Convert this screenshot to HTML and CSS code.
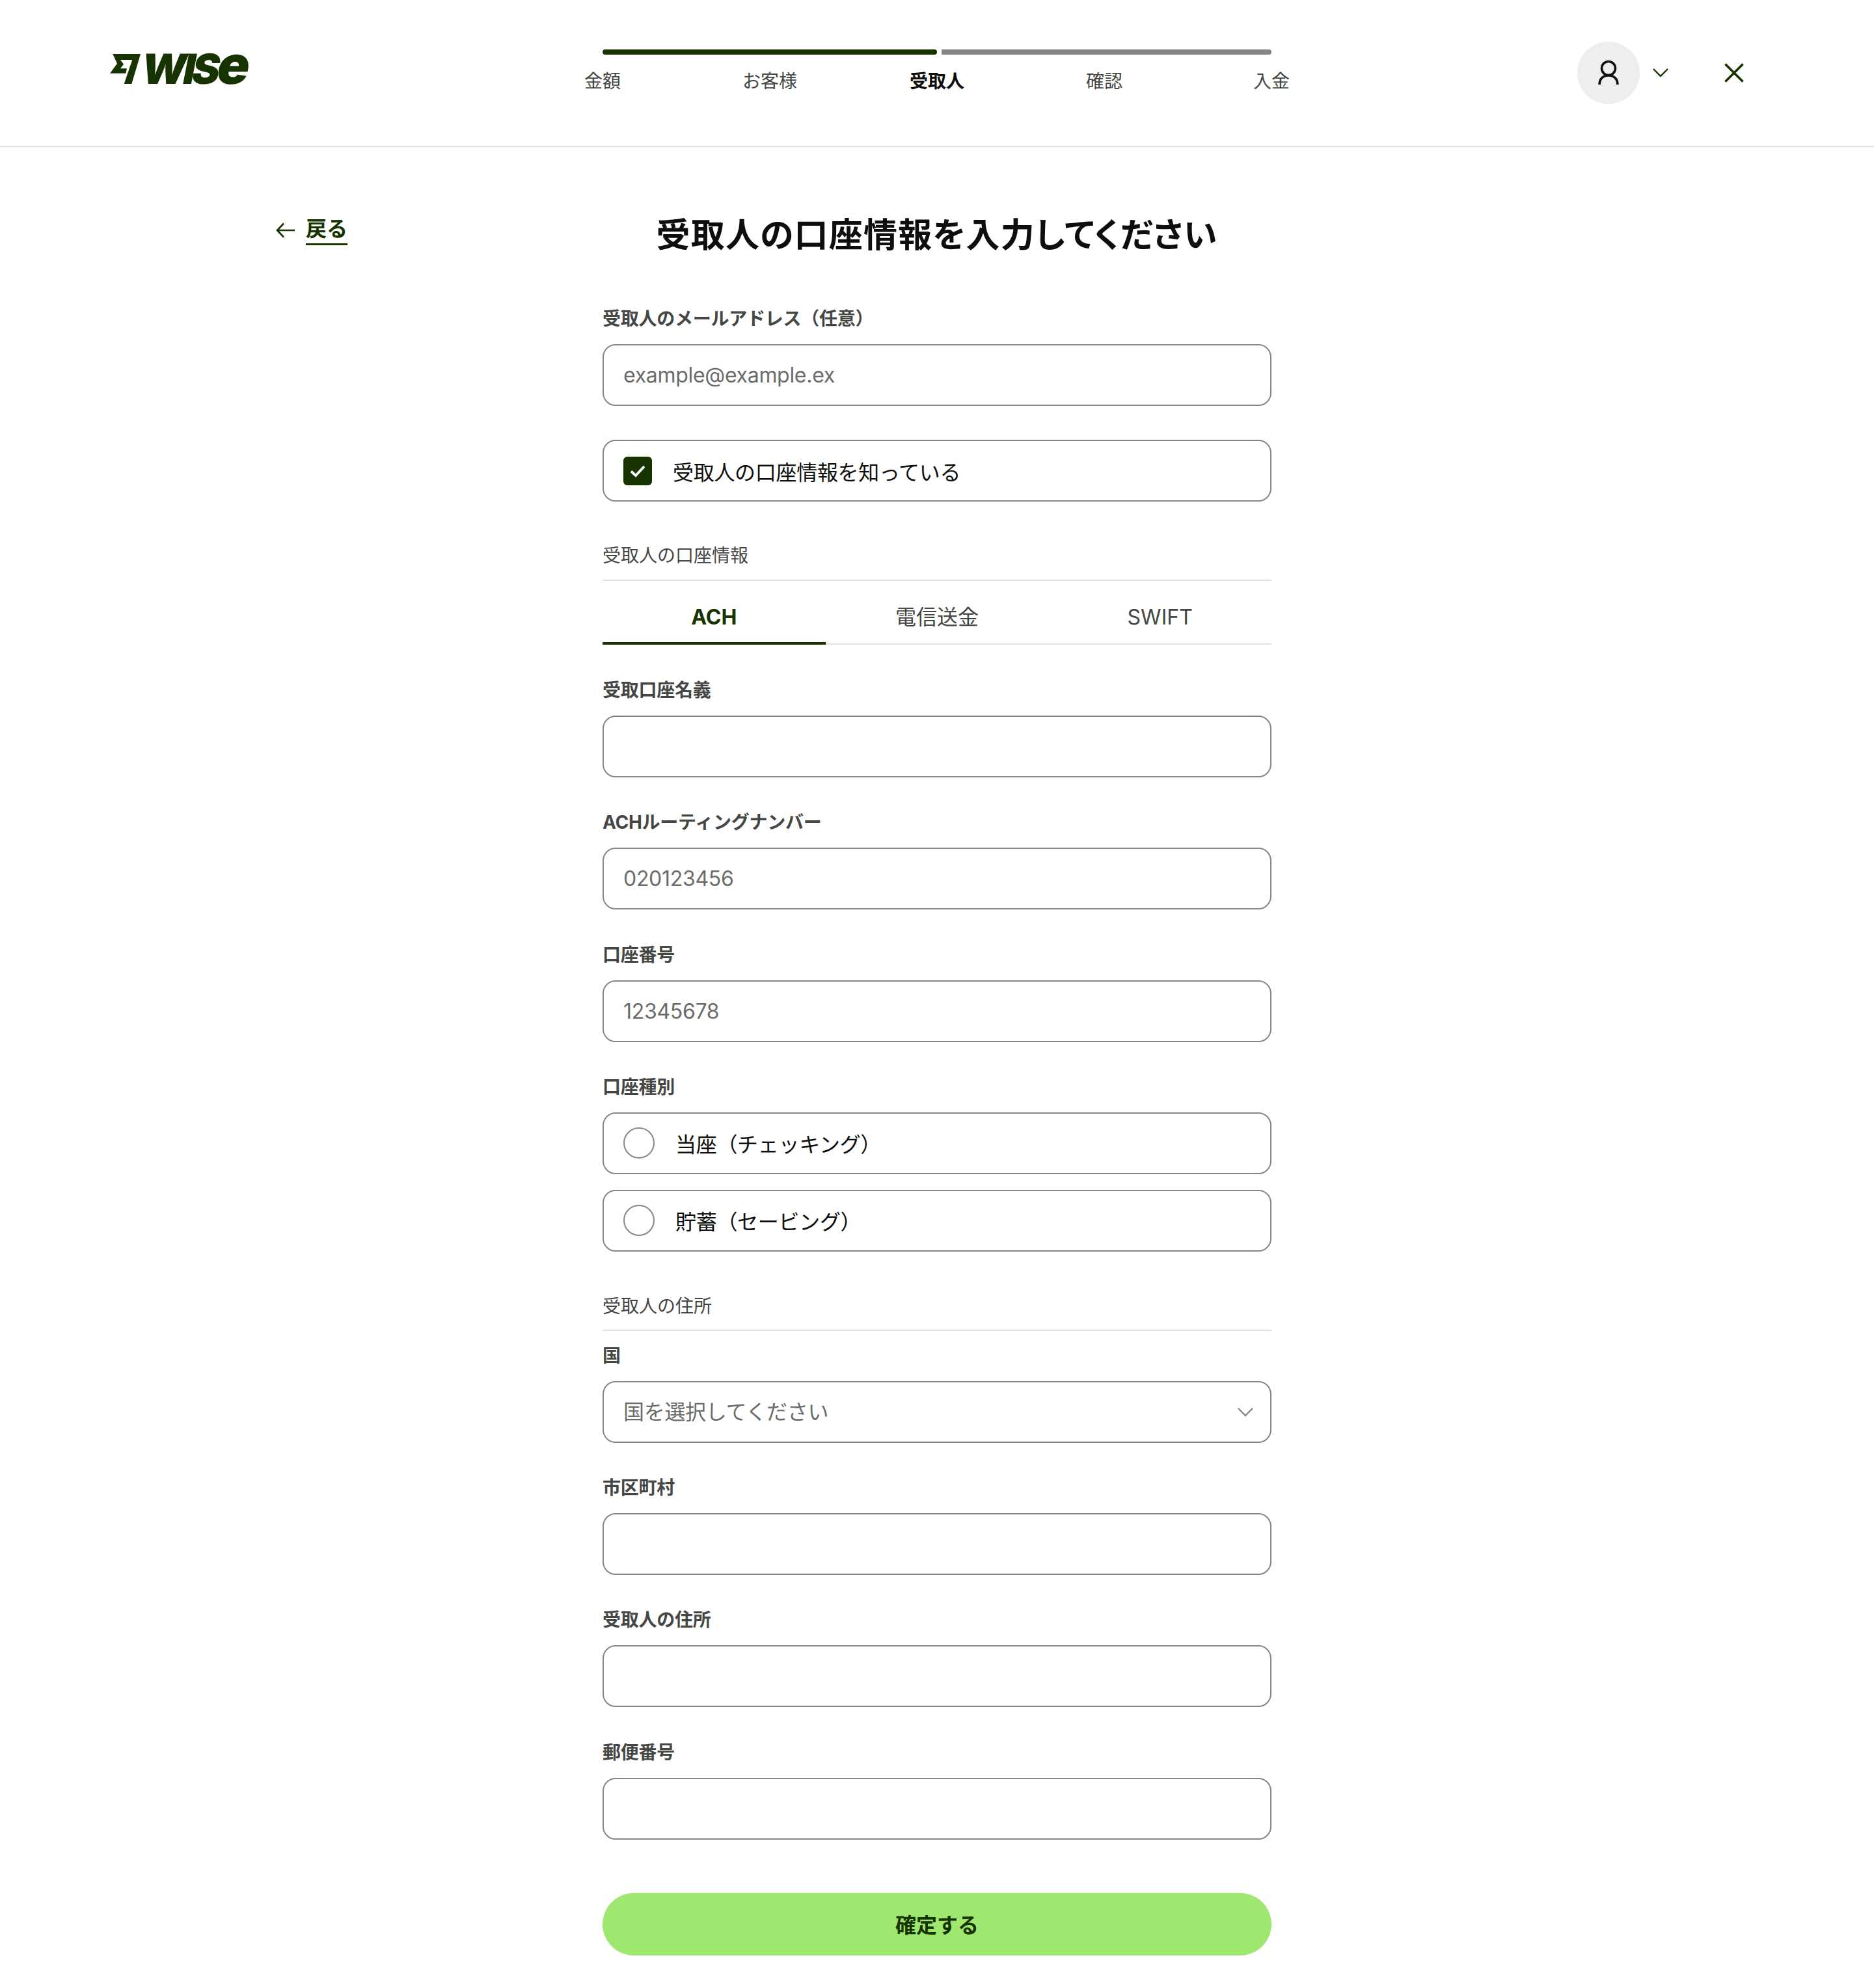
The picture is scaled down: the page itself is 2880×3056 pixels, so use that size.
FILE: index.html
```html
<!DOCTYPE html>
<html lang="ja">
<head>
  <meta charset="UTF-8" />
  <meta name="viewport" content="width=device-width, initial-scale=1.0" />
  <title>Wise</title>
  <link rel="stylesheet" href="styles.css">
</head>
<body>
  <header class="topbar">
    <div class="logo">
      <svg class="logo-flag" width="48" height="46" viewBox="0 0 48 46">
        <path d="M4.3 0H47L33.3 46H21.7L34.3 9H16L21 15.7L16 22.3H26L24.3 29.7H0L11 14.7Z" />
      </svg>
      <span class="logo-word">WIS<span class="logo-e">e</span></span>
    </div>

    <div class="stepper">
      <div class="step-bars">
        <div class="step-bar done"></div>
        <div class="step-bar"></div>
      </div>
      <div class="step-labels">
        <div class="step"><span>金額</span></div>
        <div class="step"><span>お客様</span></div>
        <div class="step current"><span>受取人</span></div>
        <div class="step"><span>確認</span></div>
        <div class="step"><span>入金</span></div>
      </div>
    </div>

    <div class="account">
      <div class="avatar">
        <svg width="36" height="40" viewBox="0 0 36 40" fill="none" stroke="#0e0f0c" stroke-width="3.6">
          <circle cx="18" cy="13" r="10.5" />
          <path d="M4 38C4 29 10 24 18 24S32 29 32 38" />
        </svg>
      </div>
      <svg class="account-chevron" width="24" height="14" viewBox="0 0 24 14" fill="none" stroke="#163300" stroke-width="2.4">
        <path d="M1 1L12 12L23 1" />
      </svg>
      <svg class="close" width="30" height="30" viewBox="0 0 30 30" fill="none" stroke="#163300" stroke-width="3.6">
        <path d="M1.5 1.5L28.5 28.5M28.5 1.5L1.5 28.5" />
      </svg>
    </div>
  </header>

  <main class="page">
    <a class="back" href="#">
      <svg width="30" height="24" viewBox="0 0 30 24" fill="none" stroke="#163300" stroke-width="2.6">
        <path d="M29 12H3M12 1.5L2 12L12 22.5" />
      </svg>
      <span>戻る</span>
    </a>

    <form class="form">
      <h1>受取人の口座情報を入力してください</h1>

      <div class="field">
        <label>受取人のメールアドレス（任意）</label>
        <input type="text" placeholder="example@example.ex" />
      </div>

      <div class="box check-box">
        <span class="checkbox">
          <svg width="24" height="20" viewBox="0 0 24 20" fill="none" stroke="#fff" stroke-width="3.8">
            <path d="M2 10.5L9 17L22 3" />
          </svg>
        </span>
        <span>受取人の口座情報を知っている</span>
      </div>

      <div class="section-title account-title">受取人の口座情報</div>

      <div class="tabs">
        <div class="tab active">ACH</div>
        <div class="tab">電信送金</div>
        <div class="tab">SWIFT</div>
      </div>

      <div class="field">
        <label>受取口座名義</label>
        <input type="text" />
      </div>

      <div class="field">
        <label>ACHルーティングナンバー</label>
        <input type="text" placeholder="020123456" />
      </div>

      <div class="field">
        <label>口座番号</label>
        <input type="text" placeholder="12345678" />
      </div>

      <div class="field radios">
        <label>口座種別</label>
        <div class="box radio-box"><span class="radio"></span><span>当座（チェッキング）</span></div>
        <div class="box radio-box"><span class="radio"></span><span>貯蓄（セービング）</span></div>
      </div>

      <div class="section-title address-title">受取人の住所</div>

      <div class="field">
        <label>国</label>
        <div class="select">
          <select>
            <option>国を選択してください</option>
          </select>
          <svg width="24" height="14" viewBox="0 0 24 14" fill="none" stroke="#868685" stroke-width="2.4">
            <path d="M1 1L12 12L23 1" />
          </svg>
        </div>
      </div>

      <div class="field">
        <label>市区町村</label>
        <input type="text" />
      </div>

      <div class="field">
        <label>受取人の住所</label>
        <input type="text" />
      </div>

      <div class="field">
        <label>郵便番号</label>
        <input type="text" />
      </div>

      <button class="submit" type="button">確定する</button>
    </form>
  </main>
</body>
</html>
```

FILE: styles.css
```css
* { box-sizing: border-box; }

body {
  margin: 0;
  background: #fff;
  color: #0e0f0c;
  font-family: Inter, "Noto Sans CJK JP", sans-serif;
  font-size: 32px;
}

.topbar {
  display: grid;
  grid-template-columns: 1fr 1028px 1fr;
  height: 226px;
  border-bottom: 2px solid #e2e2e2;
}

.logo {
  display: flex;
  align-items: flex-start;
  gap: 2px;
  padding: 83px 0 0 169px;
}

.logo-word {
  margin-top: -23px;
  color: #163300;
  font-size: 64px;
  font-weight: 900;
  line-height: 80px;
  letter-spacing: -5px;
  transform: skewX(-11deg);
}

.logo-e { font-size: 82px; }

.logo-flag { fill: #163300; flex: none; }

.stepper { padding-top: 76px; }

.step-bars {
  display: flex;
  gap: 7px;
}

.step-bar {
  flex: 1;
  height: 8px;
  background: #868685;
  border-radius: 0 4px 4px 0;
}

.step-bar.done {
  flex: none;
  width: 514px;
  background: #163300;
  border-radius: 4px;
}

.step-labels {
  display: flex;
  justify-content: space-between;
  margin-top: 21px;
}

.step {
  display: flex;
  justify-content: center;
  width: 0;
  color: #454745;
  font-size: 28px;
  line-height: 40px;
  white-space: nowrap;
}

.step.current {
  color: #0e0f0c;
  font-weight: 700;
}

.account {
  display: flex;
  align-items: flex-start;
  padding: 64px 0 0 470px;
}

.avatar {
  display: flex;
  align-items: center;
  justify-content: center;
  flex: none;
  width: 96px;
  height: 96px;
  background: #edefec;
  border-radius: 50%;
}

.account-chevron {
  flex: none;
  margin: 41px 0 0 20px;
}

.close {
  flex: none;
  margin: 33px 0 0 86px;
}

.page {
  display: grid;
  grid-template-columns: 1fr 1028px 1fr;
  align-items: start;
  padding: 0 0 50px;
}

.back {
  display: flex;
  align-items: center;
  gap: 16px;
  justify-self: start;
  margin: 104px 0 0 424px;
  color: #163300;
  font-size: 32px;
  font-weight: 700;
  line-height: 44px;
  text-decoration: none;
}

.back span { border-bottom: 3px solid #163300; }

.form { grid-column: 2; }

h1 {
  margin: 100px -40px 71px;
  font-size: 52px;
  font-weight: 700;
  line-height: 72px;
  letter-spacing: 1.2px;
  text-align: center;
  font-feature-settings: "palt";
}

.field { margin-bottom: 48.3px; }

.field label {
  display: block;
  height: 40px;
  margin-bottom: 20px;
  color: #454745;
  font-size: 28px;
  font-weight: 700;
  line-height: 43px;
  letter-spacing: -0.25px;
}

input,
select,
.box {
  display: block;
  width: 100%;
  height: 95px;
  padding: 0 30px;
  background: #fff;
  border: 2px solid #868685;
  border-radius: 20px;
  color: #0e0f0c;
  font-family: inherit;
  font-size: 32px;
  letter-spacing: -0.3px;
}

input::placeholder { color: #6a6c6a; opacity: 1; }

.box {
  display: flex;
  align-items: center;
}

.check-box {
  gap: 32px;
  margin-top: 52px;
}

.checkbox {
  display: flex;
  align-items: center;
  justify-content: center;
  flex: none;
  width: 44px;
  height: 44px;
  background: #163300;
  border-radius: 6px;
}

.section-title {
  color: #454745;
  font-size: 28px;
  line-height: 43px;
  padding-bottom: 15px;
  border-bottom: 2px solid #e2e2e2;
}

.account-title { margin-top: 62px; }

.address-title {
  padding-bottom: 14px;
  margin: 0 0 17px;
}

.tabs {
  display: flex;
  height: 98px;
  margin-bottom: 49px;
  border-bottom: 2px solid #e2e2e2;
}

.tab {
  flex: 1;
  height: 98px;
  padding-top: 33px;
  color: #454745;
  line-height: 46px;
  text-align: center;
}

.tab.active {
  color: #163300;
  font-weight: 700;
  border-bottom: 4px solid #163300;
}

.radios { margin-bottom: 63px; }

.radio-box {
  gap: 32px;
  margin-bottom: 24px;
}

.radio-box:last-child { margin-bottom: 0; }

.radio {
  flex: none;
  width: 48px;
  height: 48px;
  border: 2px solid #868685;
  border-radius: 50%;
}

.select { position: relative; }

select {
  appearance: none;
  color: #6a6c6a;
}

.select svg {
  position: absolute;
  top: 41px;
  right: 28px;
}

.submit {
  display: block;
  width: 100%;
  height: 96px;
  margin-top: 82px;
  padding-bottom: 3px;
  background: #9fe870;
  border: 0;
  border-radius: 48px;
  color: #163300;
  font-family: inherit;
  font-size: 32px;
  font-weight: 700;
}
```
